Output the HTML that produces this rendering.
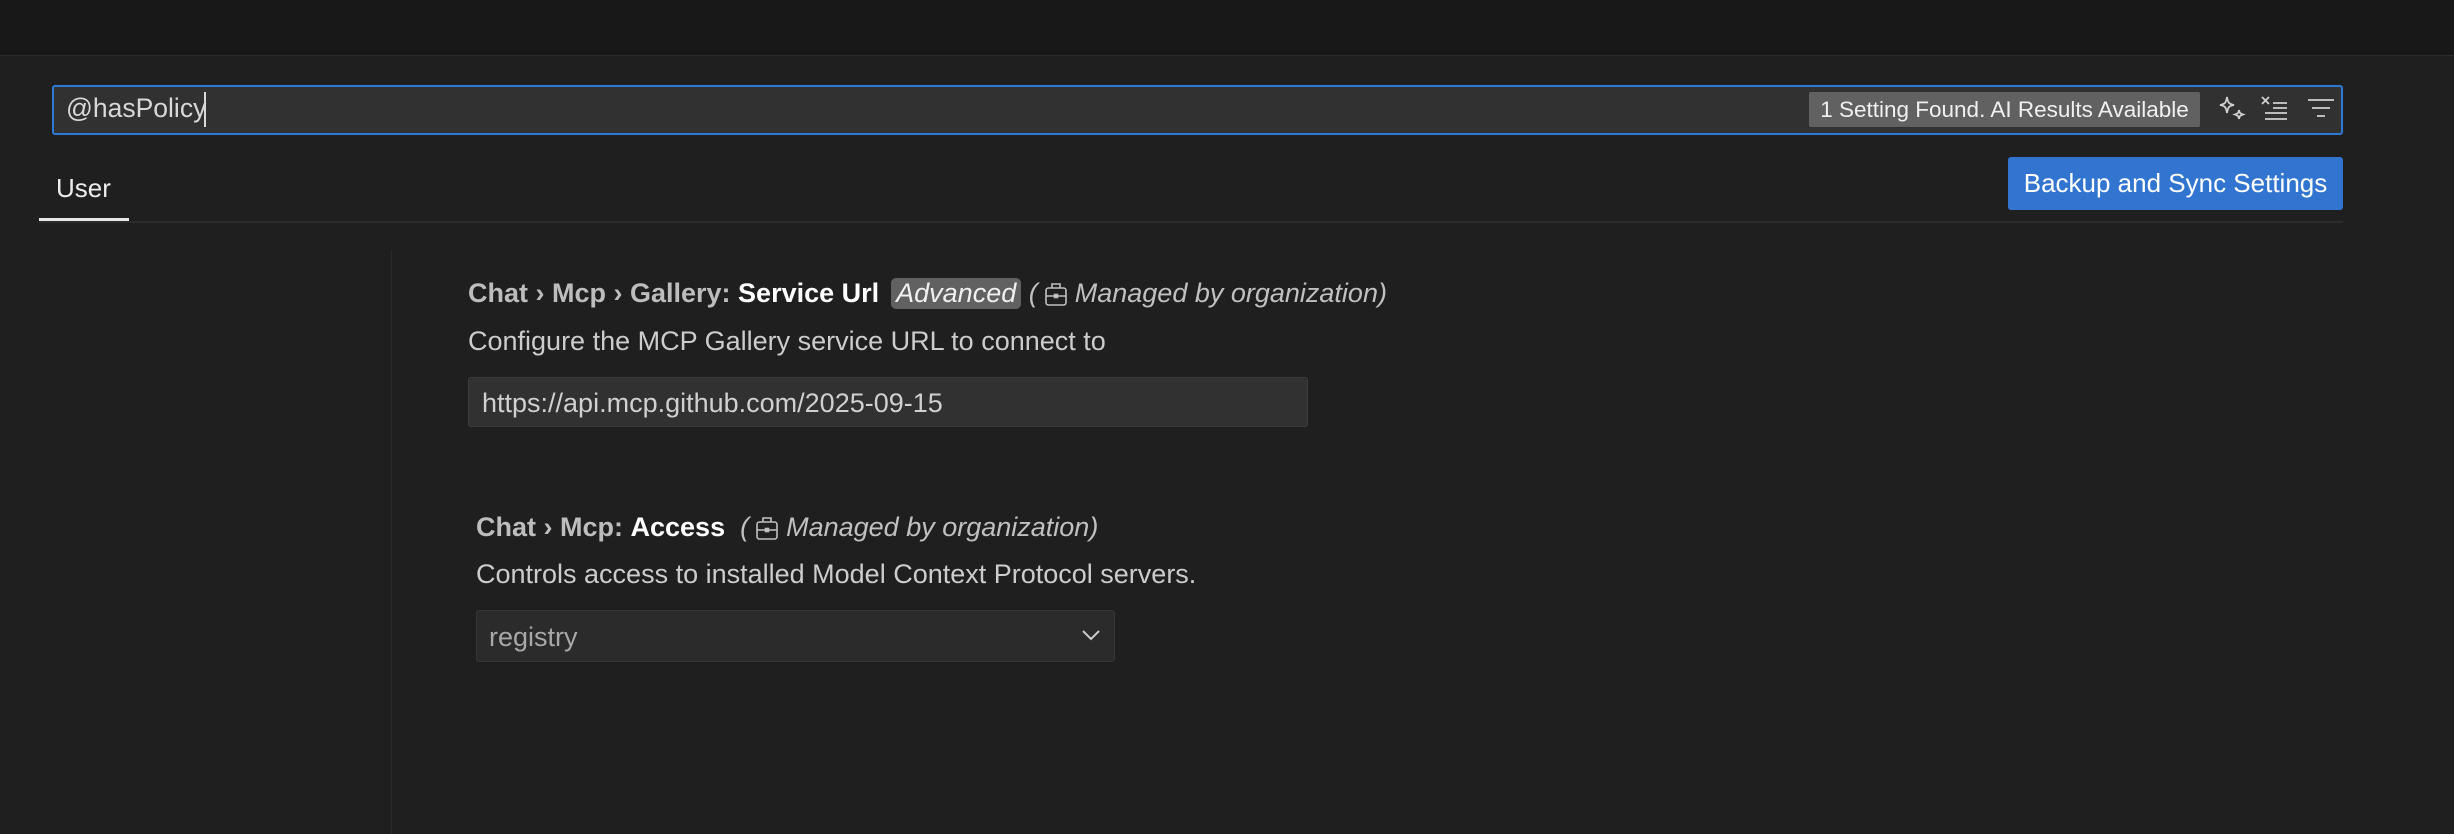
<!DOCTYPE html>
<html><head><meta charset="utf-8"><style>
body{margin:0;width:2454px;height:834px;background:#1f1f1f;font-family:"Liberation Sans",sans-serif;overflow:hidden;position:relative;color:#cccccc}
.a{position:absolute}
.top{left:0;top:0;width:2454px;height:55px;background:#181818;border-bottom:1px solid #2b2b2b}
.search{left:52px;top:85px;width:2287px;height:46px;background:#313131;border:2px solid #2f78d4;border-radius:3px}
.t{white-space:nowrap;font-size:27px}
.badge{left:1809px;top:92px;width:391px;height:35px;background:#616161;border-radius:2px;color:#f0f0f0;font-size:22.5px;line-height:35px;text-align:center}
.btn{left:2008px;top:157px;width:335px;height:53px;background:#3275d0;border-radius:3px;color:#fff;font-size:26px;line-height:53px;text-align:center}
.sep{left:39px;top:221px;width:2304px;height:2px;background:#2b2b2b}
.ul{left:39px;top:218px;width:90px;height:3px;background:#e6e6e6}
.vl{left:391px;top:250px;width:1px;height:584px;background:#2b2b2b}
.inp{background:#313131;border:1px solid #3c3c3c;border-radius:3px;box-sizing:border-box}
b{color:#fff}
.bold{font-weight:bold;color:#bdbdbd}
i{color:#c0c0c0;font-weight:normal}
.adv{display:inline-block;background:#616161;border-radius:5px;color:#f0f0f0;padding:0 5px;line-height:31px;font-weight:normal;font-style:italic;margin-left:12px}
svg.bc{vertical-align:-6px;margin:0 7px 0 6px}
</style></head><body>
<div class="a top"></div>
<div class="a search"></div>
<div class="a t" style="left:66px;top:93px;color:#d8d8d8;font-size:26.5px">@hasPolicy</div>
<div class="a" style="left:204px;top:92px;width:2px;height:35px;background:#d8d8d8"></div>
<div class="a badge">1 Setting Found. AI Results Available</div>
<svg class="a" style="left:2218px;top:94px" width="30" height="30" viewBox="0 0 30 30" fill="none" stroke="#cfcfcf" stroke-width="1.8"><path d="M9 3 C10 9 11 10 16 11 C11 12 10 13 9 19 C8 13 7 12 2 11 C7 10 8 9 9 3Z"/><path d="M21 16 C21.6 19 22 19.5 25 20.5 C22 21.5 21.6 22 21 25 C20.4 22 20 21.5 17 20.5 C20 19.5 20.4 19 21 16Z"/></svg>
<svg class="a" style="left:2261px;top:94px" width="30" height="30" viewBox="0 0 30 30" fill="none" stroke="#cfcfcf" stroke-width="1.8"><path d="M1 3 L8 10 M8 3 L1 10 M12 9 H26 M12 14 H26 M4 19 H26 M4 25 H26"/></svg>
<svg class="a" style="left:2306px;top:94px" width="30" height="30" viewBox="0 0 30 30" fill="none" stroke="#cfcfcf" stroke-width="1.8"><path d="M2 6 H28 M6 14 H24 M11 22 H19"/></svg>
<div class="a t" style="left:56px;top:173px;color:#ececec;font-size:26px">User</div>
<div class="a sep"></div><div class="a ul"></div>
<div class="a btn">Backup and Sync Settings</div>
<div class="a vl"></div>

<div class="a t bold" style="left:468px;top:278px">Chat › Mcp › Gallery: <b>Service Url</b><span class="adv">Advanced</span> <i>(<svg class="bc" width="24" height="28" viewBox="0 0 24 28" fill="none" stroke="#c0c0c0" stroke-width="1.6"><rect x="2" y="8" width="20" height="17" rx="2.5"/><path d="M8 8 V4 H16 V8 M2 16 H22"/><rect x="10.5" y="14.5" width="3" height="3" fill="#c0c0c0"/></svg>Managed by organization)</i></div>
<div class="a t" style="left:468px;top:326px">Configure the MCP Gallery service URL to connect to</div>
<div class="a inp" style="left:468px;top:377px;width:840px;height:50px"></div>
<div class="a t" style="left:482px;top:388px;color:#d0d0d0">https://api.mcp.github.com/2025-09-15</div>

<div class="a t bold" style="left:476px;top:512px">Chat › Mcp: <b>Access</b> &nbsp;<i>(<svg class="bc" width="24" height="28" viewBox="0 0 24 28" fill="none" stroke="#c0c0c0" stroke-width="1.6"><rect x="2" y="8" width="20" height="17" rx="2.5"/><path d="M8 8 V4 H16 V8 M2 16 H22"/><rect x="10.5" y="14.5" width="3" height="3" fill="#c0c0c0"/></svg>Managed by organization)</i></div>
<div class="a t" style="left:476px;top:559px">Controls access to installed Model Context Protocol servers.</div>
<div class="a inp" style="left:476px;top:610px;width:639px;height:52px;background:#2b2b2b;border-color:#363636"></div>
<div class="a t" style="left:489px;top:622px;color:#a8a8a8">registry</div>
<svg class="a" style="left:1080px;top:626px" width="22" height="18" viewBox="0 0 22 18" fill="none" stroke="#cccccc" stroke-width="2"><path d="M3 5 L11 13 L19 5"/></svg>
</body></html>
